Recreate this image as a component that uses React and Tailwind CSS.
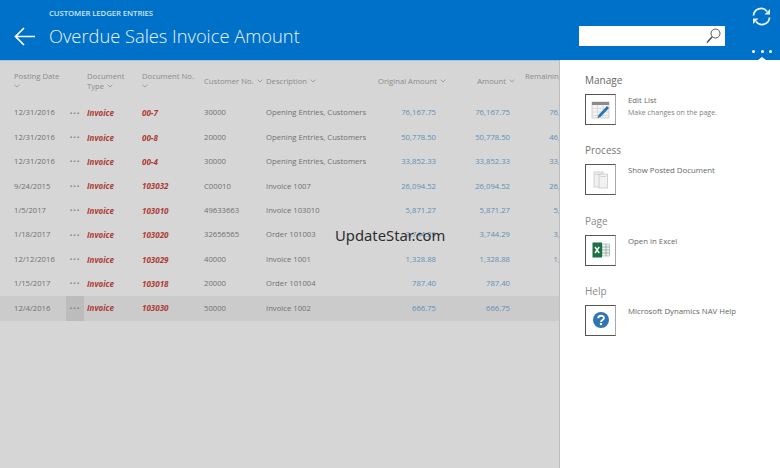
import React from 'react';

const rows = [
    { date: '12/31/2016', no: '00-7', cust: '30000', desc: 'Opening Entries, Customers', orig: '76,167.75', amt: '76,167.75', rem: '76,167.75' },
    { date: '12/31/2016', no: '00-8', cust: '20000', desc: 'Opening Entries, Customers', orig: '50,778.50', amt: '50,778.50', rem: '46,778.50' },
    { date: '12/31/2016', no: '00-4', cust: '30000', desc: 'Opening Entries, Customers', orig: '33,852.33', amt: '33,852.33', rem: '33,852.33' },
    { date: '9/24/2015', no: '103032', cust: 'C00010', desc: 'Invoice 1007', orig: '26,094.52', amt: '26,094.52', rem: '26,094.52' },
    { date: '1/5/2017', no: '103010', cust: '49633663', desc: 'Invoice 103010', orig: '5,871.27', amt: '5,871.27', rem: '5,871.27' },
    { date: '1/18/2017', no: '103020', cust: '32656565', desc: 'Order 101003', orig: '3,744.29', amt: '3,744.29', rem: '3,744.29' },
    { date: '12/12/2016', no: '103029', cust: '40000', desc: 'Invoice 1001', orig: '1,328.88', amt: '1,328.88', rem: '1,328.88' },
    { date: '1/15/2017', no: '103018', cust: '20000', desc: 'Order 101004', orig: '787.40', amt: '787.40', rem: '787.40' },
    { date: '12/4/2016', no: '103030', cust: '50000', desc: 'Invoice 1002', orig: '666.75', amt: '666.75', rem: '666.75', selected: true },
];

const gridCols = 'grid grid-cols-[52px_18px_58px_62px_62px_112px_58px_74px_74px]';

const Chevron = () => (
    <svg width="6" height="4" viewBox="0 0 7 5" className="inline-block ml-[3px] align-[1px]" fill="none" stroke="#8a8a8a" strokeWidth="0.9">
        <path d="M0.5 0.8 L3.5 3.8 L6.5 0.8" />
    </svg>
);

const EditIcon = () => (
    <svg width="20" height="20" viewBox="0 0 20 20">
        <rect x="1" y="2" width="17" height="16" fill="#f4f4f4" stroke="#b5b5b5" strokeWidth="0.6" />
        <rect x="1" y="2" width="17" height="3" fill="#8a8a8a" />
        <path d="M1 8.5H18M1 12H18M1 15.5H18M6.5 5V18M12 5V18" stroke="#cccccc" strokeWidth="0.6" />
        <path d="M6.5 18 L7.5 15 L16 6 L18 8 L9.5 17 Z" fill="#2a73b8" />
    </svg>
);

const DocIcon = () => (
    <svg width="16" height="18" viewBox="0 0 16 18" fill="#f1f1f1" stroke="#c9c9c9" strokeWidth="0.8">
        <rect x="1" y="1" width="9" height="15" />
        <rect x="6" y="3" width="8.5" height="14" />
        <path d="M2.5 3.5H8M7.5 5.5H13" fill="none" />
    </svg>
);

const ExcelIcon = () => (
    <svg width="18" height="16" viewBox="0 0 18 16">
        <rect x="6" y="2" width="11.5" height="12" fill="#f5f5f5" stroke="#8fa898" strokeWidth="0.6" />
        <path d="M10 2V14M14 2V14M6 5H17.5M6 8H17.5M6 11H17.5" stroke="#7f9f8c" strokeWidth="0.7" />
        <rect x="0.5" y="0.5" width="9.5" height="15" fill="#1c7045" />
        <path d="M3 5 L7.2 11M7.2 5 L3 11" stroke="#ffffff" strokeWidth="1.4" />
    </svg>
);

const HelpIcon = () => (
    <svg width="16" height="16" viewBox="0 0 16 16">
        <circle cx="8" cy="8" r="8" fill="#2f74b5" />
        <path d="M5.2 6.2 C5.2 2.9 10.9 2.9 10.9 6 C10.9 8 8 8 8 10" fill="none" stroke="#ffffff" strokeWidth="1.9" />
        <rect x="6.9" y="11" width="2.2" height="2.2" fill="#ffffff" />
    </svg>
);

const ActionGroup = ({ title, titleClass, icon, label, note, className }) => (
    <div className={className}>
        <div className={`text-[10px] leading-[14px] ${titleClass}`}>{title}</div>
        <div className="flex gap-[12px] mt-[7px]">
            <div className="w-[31px] h-[31px] flex items-center justify-center bg-white border border-[#555555] border-r-[#a8a8a8]">
                {icon}
            </div>
            <div className="pt-[1px]">
                <div className="text-[7.8px] leading-[11px] text-[#666666]">{label}</div>
                {note && <div className="text-[7px] leading-[11px] mt-[1px] text-[#808080]">{note}</div>}
            </div>
        </div>
    </div>
);

export default function App() {
    return (
        <div className="relative w-[780px] h-[468px] overflow-hidden bg-[#d6d6d6] font-['Open_Sans','Liberation_Sans',sans-serif]">
            {/* header */}
            <header className="h-[60px] flex bg-[#0071c8] text-white">
                <div className="pl-[14px] pt-[27px]">
                    <svg width="21" height="19" viewBox="0 0 21 19" fill="none" stroke="#ffffff" strokeWidth="1.7">
                        <path d="M21 9.5H1.5M10 1 L1.5 9.5 L10 18" />
                    </svg>
                </div>
                <div className="ml-[14px] pt-[9px]">
                    <div className="text-[7.8px] leading-[8px] font-semibold text-[#cfe5f6] tracking-[-0.1px]">CUSTOMER LEDGER ENTRIES</div>
                    <div className="mt-[6px] text-[18.3px] leading-[26px] font-light text-[#eaf4fb]">Overdue Sales Invoice Amount</div>
                </div>
                <div className="ml-auto w-[146px] h-[20px] mt-[26px] mr-[55px] bg-white flex items-center justify-end pr-[4px]">
                    <svg width="15" height="16" viewBox="0 0 15 16" fill="none" stroke="#444444">
                        <circle cx="9.5" cy="5.5" r="4.5" strokeWidth="0.9" />
                        <path d="M6.2 8.8 L1 14.5" strokeWidth="1.3" />
                    </svg>
                </div>
            </header>

            <div className="flex h-[408px]">
                {/* list behind the panel */}
                <main className="w-[560px] overflow-hidden border-r border-[#bdbdbd] border-t border-t-[#a9c3dc]">
                    <div className={`${gridCols} pl-[14px] h-[40px] pt-[10px] text-[7.7px] leading-[10px] text-[#8b8b8b]`}>
                        <div className="whitespace-nowrap">Posting Date<br /><span className="-ml-[3px]"><Chevron /></span></div>
                        <div />
                        <div className="pl-[3px]">Document<br />Type<Chevron /></div>
                        <div className="whitespace-nowrap">Document No.<br /><span className="-ml-[3px]"><Chevron /></span></div>
                        <div className="whitespace-nowrap pt-[5px]">Customer No.<Chevron /></div>
                        <div className="whitespace-nowrap pt-[5px]">Description<Chevron /></div>
                        <div className="whitespace-nowrap text-right pt-[5px] -mr-[5px]">Original Amount<Chevron /></div>
                        <div className="whitespace-nowrap text-right pt-[5px] -mr-[5px]">Amount<Chevron /></div>
                        <div className="pl-[15px] whitespace-nowrap">Remaining Amount</div>
                    </div>
                    <div>
                        {rows.map(row => (
                            <div
                                key={row.no}
                                className={`${gridCols} pl-[14px] h-[24.4px] items-center text-[7.7px] text-[#717171] ${row.selected ? 'bg-[#cbcbcb]' : ''}`}
                            >
                                <div className="whitespace-nowrap">{row.date}</div>
                                <div className={`h-full flex items-center justify-center text-[10px] font-semibold tracking-[0.7px] text-[#777777] ${row.selected ? 'bg-[#bcbcbc]' : ''}`}>···</div>
                                <div className="pl-[3px] text-[8px] italic font-bold text-[#ad3a33]">Invoice</div>
                                <div className="text-[8px] italic font-bold text-[#ad3a33]">{row.no}</div>
                                <div>{row.cust}</div>
                                <div className="whitespace-nowrap">{row.desc}</div>
                                <div className="text-right text-[#5f8fb5]">{row.orig}</div>
                                <div className="text-right text-[#5f8fb5]">{row.amt}</div>
                                <div className="text-right text-[#5f8fb5] whitespace-nowrap">{row.rem}</div>
                            </div>
                        ))}
                    </div>
                </main>

                {/* actions panel */}
                <aside className="flex-1 bg-white pl-[25px] pt-[13px]">
                    <ActionGroup title="Manage" titleClass="text-[#666666]" icon={<EditIcon />} label="Edit List" note="Make changes on the page." />
                    <ActionGroup className="mt-[18.3px]" title="Process" titleClass="text-[#777777]" icon={<DocIcon />} label="Show Posted Document" />
                    <ActionGroup className="mt-[18.3px]" title="Page" titleClass="text-[#8a8a8a]" icon={<ExcelIcon />} label="Open in Excel" />
                    <ActionGroup className="mt-[18.3px]" title="Help" titleClass="text-[#8a8a8a]" icon={<HelpIcon />} label="Microsoft Dynamics NAV Help" />
                </aside>
            </div>

            {/* refresh and more buttons */}
            <svg className="absolute left-[752px] top-[7px]" width="19" height="19" viewBox="0 0 19 19" fill="none" stroke="#e6f1fa" strokeWidth="1.8">
                <path d="M1.5 8.5 A7.5 7.5 0 0 1 15 4.5" />
                <path d="M17.5 10.5 A7.5 7.5 0 0 1 4 14.5" />
                <path d="M18 2 V7.5 H12.5 Z" fill="#e6f1fa" stroke="none" />
                <path d="M1 17 V11.5 H6.5 Z" fill="#e6f1fa" stroke="none" />
            </svg>
            <div className="absolute left-[752px] top-[50px] flex gap-[5.5px]">
                <span className="w-[3px] h-[3px] rounded-full bg-white" />
                <span className="w-[3px] h-[3px] rounded-full bg-white" />
                <span className="w-[3px] h-[3px] rounded-full bg-white" />
            </div>
            <div className="absolute left-[758px] top-[57px] w-0 h-0 border-x-[4px] border-x-transparent border-b-[3px] border-b-white" />

            {/* watermark */}
            <div className="absolute left-[335px] top-[225px] text-[14.8px] leading-[20px] text-[#2e2e2e] font-['Noto_Sans','Open_Sans',sans-serif]">UpdateStar.com</div>
        </div>
    );
}
